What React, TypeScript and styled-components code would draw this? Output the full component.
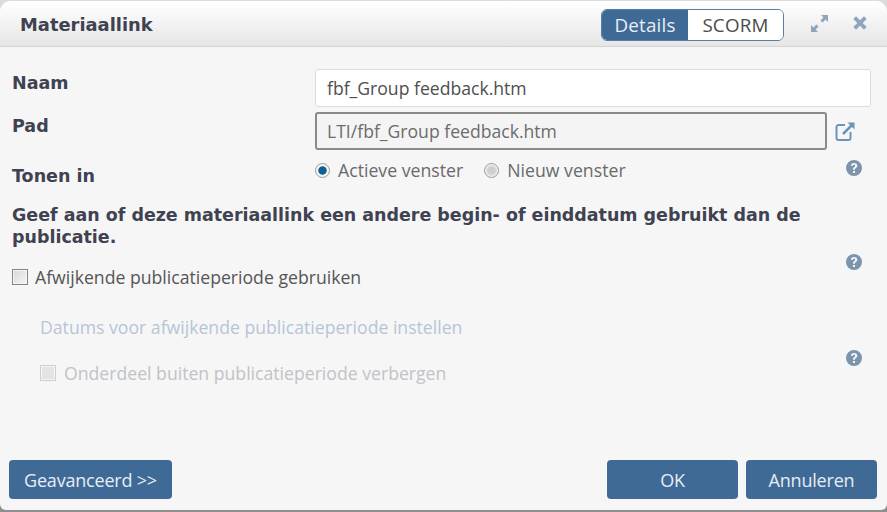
import React from "react";
import styled, { createGlobalStyle } from "styled-components";

const Global = createGlobalStyle`
  html, body { margin: 0; padding: 0; background: linear-gradient(#dcdcdc, #8f8f8f); }
  body { width: 887px; height: 512px; overflow: hidden; font-family: "Open Sans", "Liberation Sans", sans-serif; }
  #root { padding-top: 1px; }
`;

const Dialog = styled.div`
  width: 887px;
  height: 509px;
  background: #f6f6f6;
  border-radius: 11px 11px 6px 6px;
  display: flex;
  flex-direction: column;
  overflow: hidden;
`;

const Header = styled.header`
  height: 46px;
  flex: none;
  box-sizing: border-box;
  padding: 2px 20px 0 20px;
  display: flex;
  align-items: center;
  background: linear-gradient(#ffffff, #e6e6e6);
  border-bottom: 1px solid #d4d4d4;
`;

const Title = styled.h1`
  margin: 0;
  flex: 1;
  font: bold 17.9px "DejaVu Sans", Verdana, sans-serif;
  color: #3f4250;
`;

const Tabs = styled.div`
  display: flex;
  width: 183px;
  height: 32px;
  box-sizing: border-box;
  border: 1px solid #5a7ea3;
  border-radius: 6px;
  overflow: hidden;
  background: #fff;
  margin-right: 27px;
`;

const Tab = styled.div<{ $active?: boolean }>`
  width: ${(p) => (p.$active ? "86px" : "auto")};
  flex: ${(p) => (p.$active ? "none" : "1")};
  display: flex;
  align-items: center;
  justify-content: center;
  padding-top: 1px;
  font-size: 18.8px;
  letter-spacing: 0.2px;
  color: ${(p) => (p.$active ? "#e8eff6" : "#4b4b4b")};
  background: ${(p) => (p.$active ? "#3f6a96" : "#fff")};
`;

const HeaderIcon = styled.svg<{ $gap?: number }>`
  display: block;
  flex: none;
  margin-left: ${(p) => p.$gap ?? 0}px;
  margin-bottom: 3px;
  fill: #8ea5bd;
`;

const Body = styled.main`
  flex: 1;
  display: flex;
  flex-direction: column;
  padding: 21px 16px 0 12px;
  min-height: 0;
`;

const Row = styled.div`
  display: flex;
  align-items: flex-start;
`;

const Label = styled.label<{ $top: number }>`
  width: 303px;
  flex: none;
  margin-top: ${(p) => p.$top}px;
  font: bold 17.5px/20px "DejaVu Sans", Verdana, sans-serif;
  color: #3f4250;
`;

const Field = styled.div<{ $readonly?: boolean }>`
  flex: 1;
  height: 38px;
  box-sizing: border-box;
  display: flex;
  align-items: center;
  padding-left: ${(p) => (p.$readonly ? 10 : 11)}px;
  font-size: 17.6px;
  border-radius: 3px;
  color: ${(p) => (p.$readonly ? "#6c6c6c" : "#4e4e4e")};
  background: ${(p) => (p.$readonly ? "#f4f4f4" : "#ffffff")};
  border: ${(p) => (p.$readonly ? "2px solid #8a8a8a" : "1px solid #dcdcdc")};
`;

const NameRow = styled(Row)`
  height: 43px;
  margin-top: 1px;
`;

const PathRow = styled(Row)`
  height: 48px;
`;

const OpenLink = styled.svg`
  flex: none;
  margin: 9px 15px 0 8px;
  display: block;
`;

const DisplayRow = styled(Row)`
  height: 44px;
`;

const RadioGroup = styled.div`
  flex: 1;
  display: flex;
  align-items: center;
  height: 20px;
`;

const Radio = styled.span<{ $on?: boolean }>`
  width: 15px;
  height: 15px;
  flex: none;
  box-sizing: border-box;
  border-radius: 50%;
  border: 1px solid #9a9a9a;
  background: ${(p) =>
    p.$on
      ? "radial-gradient(circle, #0f5f95 0 3.8px, #f4f4f4 4.6px)"
      : "radial-gradient(circle, #cfcfcf 0 3.5px, #f0f0f0 6px)"};
  margin-right: 8px;
`;

const RadioText = styled.span`
  font-size: 17.7px;
  color: #6a6a6a;
  margin-right: 21px;
`;

const Help = styled.svg<{ $top: number }>`
  display: block;
  flex: none;
  fill: #7d94ad;
  margin-left: auto;
  margin-right: 9px;
  margin-top: ${(p) => p.$top}px;
`;

const Notice = styled.p`
  margin: 0;
  font: bold 17.47px/22px "DejaVu Sans", Verdana, sans-serif;
  color: #3f4250;
  width: 850px;
`;

const CheckRow = styled(Row)`
  height: 65px;
  margin-top: 2px;
`;

const CheckLabel = styled.div<{ $disabled?: boolean }>`
  display: flex;
  align-items: center;
  font-size: 17.65px;
  margin-top: 15px;
  color: ${(p) => (p.$disabled ? "#c0c3c7" : "#555")};
`;

const Box = styled.span<{ $disabled?: boolean }>`
  width: 16px;
  height: 16px;
  flex: none;
  box-sizing: border-box;
  border: 1px solid ${(p) => (p.$disabled ? "#cfcfcf" : "#858585")};
  background: ${(p) => (p.$disabled ? "#e4e4e4" : "linear-gradient(135deg, #d8d8d8, #f4f4f4)")};
  box-shadow: inset 0 0 0 1px #f5f5f5;
  margin-right: ${(p) => (p.$disabled ? 8 : 7)}px;
`;

const SubLink = styled.div`
  margin: 0 0 0 28px;
  font-size: 17.65px;
  line-height: 24px;
  color: #b6c5d6;
`;

const SubRow = styled(Row)`
  padding-left: 28px;
  height: 60px;
  margin-top: 8px;
`;

const SubCheck = styled(CheckLabel)`
  margin-top: 14px;
`;

const Footer = styled.footer`
  flex: none;
  height: 50px;
  display: flex;
  align-items: flex-start;
  padding: 0 10px 0 9px;
`;

const Button = styled.button<{ $w: number }>`
  width: ${(p) => p.$w}px;
  height: 39px;
  border: 0;
  padding: 0;
  border-radius: 4px;
  background: #3f6a96;
  color: #e6edf4;
  font: 18px "Open Sans", sans-serif;
  letter-spacing: -0.2px;
`;

const Spacer = styled.div`
  flex: 1;
`;

const ButtonGap = styled.div`
  width: 8px;
`;

const HelpIcon = ({ top }: { top: number }) => (
  <Help $top={top} width="16" height="16" viewBox="0 0 16 16">
    <path
      fillRule="evenodd"
      d="M8 0a8 8 0 1 1 0 16A8 8 0 0 1 8 0zM7 11v2h2v-2zM8 3C6.2 3 5 4 4.8 5.6l2 .3C6.9 5.2 7.3 4.8 8 4.8s1.2.4 1.2 1c0 .5-.3.8-.9 1.2C7.3 7.6 7 8.3 7 9.8h2c0-.9.2-1.3.9-1.8.9-.6 1.4-1.3 1.4-2.3C11.3 4.1 9.9 3 8 3z"
    />
  </Help>
);

export default function App() {
  return (
    <>
      <Global />
      <Dialog>
        <Header>
          <Title>Materiaallink</Title>
          <Tabs>
            <Tab $active>Details</Tab>
            <Tab>SCORM</Tab>
          </Tabs>
          <HeaderIcon width="17" height="17" viewBox="0 0 17 17">
            <path d="M10 0h7v7l-2.4-2.4-3 3-2.2-2.2 3-3zM0 17v-7l2.4 2.4 3-3 2.2 2.2-3 3L7 17z" />
          </HeaderIcon>
          <HeaderIcon $gap={25} width="14" height="14" viewBox="0 0 14 14">
            <path d="M3 .3 7 4.3l4-4L13.7 3l-4 4 4 4-2.7 2.7-4-4-4 4L.3 11l4-4-4-4z" />
          </HeaderIcon>
        </Header>
        <Body>
          <NameRow>
            <Label $top={4}>Naam</Label>
            <Field>fbf_Group feedback.htm</Field>
          </NameRow>
          <PathRow>
            <Label $top={4}>Pad</Label>
            <Field $readonly>LTI/fbf_Group feedback.htm</Field>
            <OpenLink width="21" height="20" viewBox="0 0 21 20" fill="none" stroke="#6f93b8">
              <path d="M10 4H3.5A2 2 0 0 0 1.500 6v11a2 2 0 0 0 2 2h10a2 2 0 0 0 2-2v-6" strokeWidth="2" />
              <path d="M8 13 18 3" strokeWidth="2.500" />
              <path d="M12.500 1.500h7v7z" fill="#6f93b8" strokeWidth="0" />
            </OpenLink>
          </PathRow>
          <DisplayRow>
            <Label $top={6}>Tonen in</Label>
            <RadioGroup>
              <Radio $on />
              <RadioText>Actieve venster</RadioText>
              <Radio />
              <RadioText>Nieuw venster</RadioText>
            </RadioGroup>
            <HelpIcon top={0} />
          </DisplayRow>
          <Notice>
            Geef aan of deze materiaallink een andere begin- of einddatum gebruikt dan de publicatie.
          </Notice>
          <CheckRow>
            <CheckLabel>
              <Box />
              Afwijkende publicatieperiode gebruiken
            </CheckLabel>
            <HelpIcon top={4} />
          </CheckRow>
          <SubLink>Datums voor afwijkende publicatieperiode instellen</SubLink>
          <SubRow>
            <SubCheck $disabled>
              <Box $disabled />
              Onderdeel buiten publicatieperiode verbergen
            </SubCheck>
            <HelpIcon top={3} />
          </SubRow>
        </Body>
        <Footer>
          <Button $w={163}>Geavanceerd &gt;&gt;</Button>
          <Spacer />
          <Button $w={131}>OK</Button>
          <ButtonGap />
          <Button $w={131}>Annuleren</Button>
        </Footer>
      </Dialog>
    </>
  );
}
